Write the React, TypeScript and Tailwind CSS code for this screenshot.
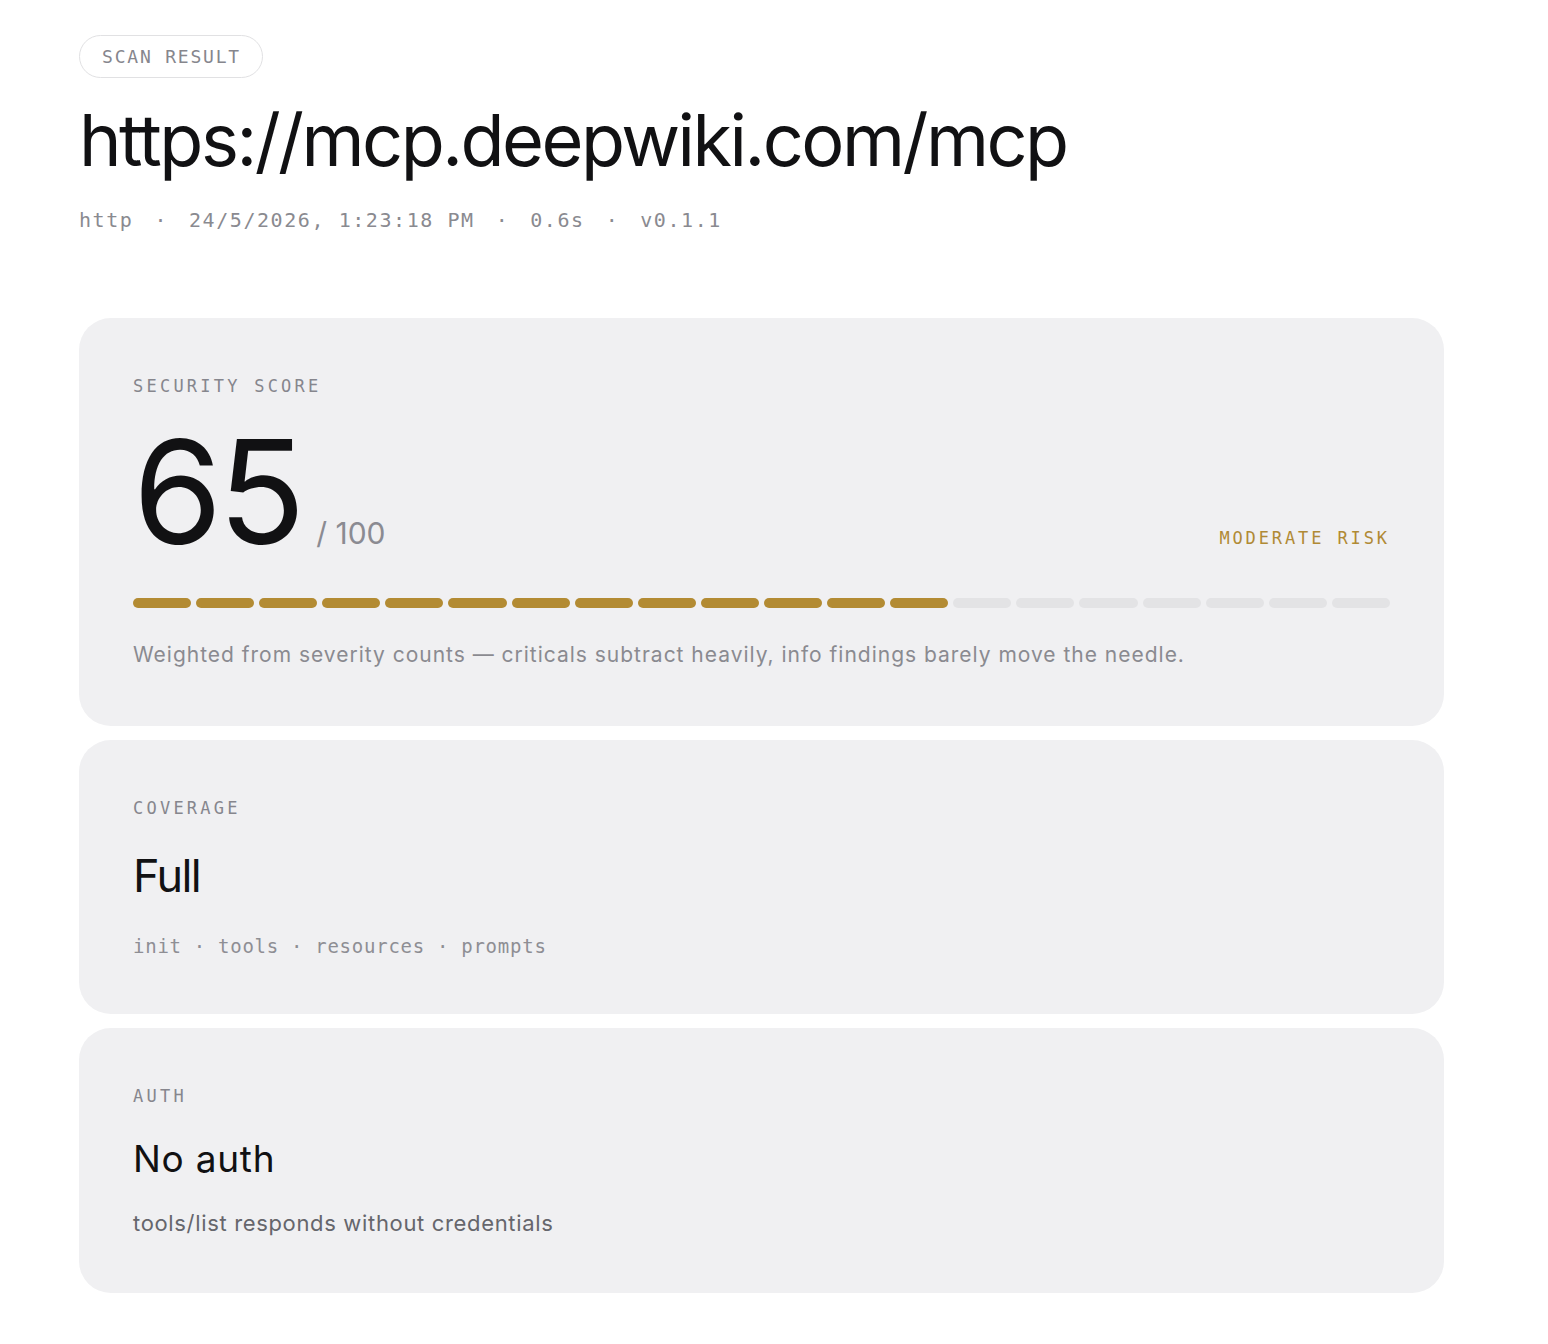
const SANS = "font-['Inter','Noto_Sans',sans-serif]";
const MONO = "font-['DejaVu_Sans_Mono','Liberation_Mono',monospace]";

function Label({ children }: { children: string }) {
  return (
    <div className={`${MONO} text-[17px] leading-5 tracking-[0.19em] text-[#86868d] uppercase`}>
      {children}
    </div>
  );
}

function ScoreBar({ score, segments = 20 }: { score: number; segments?: number }) {
  const filled = Math.round((score / 100) * segments);
  return (
    <div className="mt-[34px] flex gap-[5px]">
      {Array.from({ length: segments }).map((_, i) => (
        <span
          key={i}
          className={`h-[10px] flex-1 rounded-full ${i < filled ? "bg-[#b38b33]" : "bg-[#e3e3e5]"}`}
        />
      ))}
    </div>
  );
}

export default function App() {
  const meta = ["http", "24/5/2026, 1:23:18 PM", "0.6s", "v0.1.1"];
  const coverage = ["init", "tools", "resources", "prompts"];

  return (
    <div className={`min-h-screen bg-white ${SANS} text-[#111113]`}>
      <div className="w-[1365px] ml-[79px] pt-[35px] pb-10">
        <span className={`inline-flex h-[43px] items-center rounded-full border-[1.5px] border-[#e1e1e3] pl-[22px] pr-[21px] ${MONO} text-[18px] tracking-[0.1em] text-[#86868d]`}>
          SCAN RESULT
        </span>

        <h1 className="mt-[26px] text-[72px] leading-none font-normal tracking-[-0.035em] text-[#111113]">
          https://mcp.deepwiki.com/mcp
        </h1>

        <div className={`mt-[30px] flex items-center gap-[21px] ${MONO} text-[20px] leading-7 tracking-[0.078em] text-[#8a8a90]`}>
          {meta.map((m, i) => (
            <div key={m} className="flex items-center gap-[21px]">
              {i > 0 && <span>·</span>}
              <span>{m}</span>
            </div>
          ))}
        </div>

        <div className="mt-[84px] flex flex-col gap-[14px]">
          {/* score */}
          <section className="rounded-[32px] bg-[#f0f0f2] px-[54px] pt-[58px] pb-[56px]">
            <Label>Security score</Label>
            <div className="mt-[24px] flex items-baseline justify-between">
              <div className="flex items-baseline gap-[15px]">
                <span className="text-[144px] leading-none tracking-[-0.03em] text-[#111113]">65</span>
                <span className="text-[30px] leading-none text-[#8b8b92]">/ 100</span>
              </div>
              <span className={`${MONO} text-[17px] tracking-[0.17em] text-[#b08a35]`}>MODERATE RISK</span>
            </div>
            <ScoreBar score={65} />
            <p className="mt-[32px] text-[21px] leading-[30px] tracking-[0.047em] text-[#8a8a90]">
              Weighted from severity counts — criticals subtract heavily, info findings barely move the needle.
            </p>
          </section>

          {/* coverage */}
          <section className="rounded-[32px] bg-[#f0f0f2] px-[54px] pt-[58px] pb-[56px]">
            <Label>Coverage</Label>
            <div className="mt-[35px] text-[45px] leading-none tracking-[-0.035em] text-[#111113]">Full</div>
            <div className={`mt-[36px] flex items-center gap-[12px] ${MONO} text-[19px] leading-6 tracking-[0.04em] text-[#8e8e94]`}>
              {coverage.map((c, i) => (
                <div key={c} className="flex items-center gap-[12px]">
                  {i > 0 && <span>·</span>}
                  <span>{c}</span>
                </div>
              ))}
            </div>
          </section>

          {/* auth */}
          <section className="rounded-[32px] bg-[#f0f0f2] px-[54px] pt-[58px] pb-[55px]">
            <Label>Auth</Label>
            <div className="mt-[34px] text-[37px] leading-none tracking-[0.02em] text-[#111113]">No auth</div>
            <p className="mt-[31px] text-[22px] leading-[30px] tracking-[0.03em] text-[#66666c]">
              tools/list responds without credentials
            </p>
          </section>
        </div>
      </div>
    </div>
  );
}
